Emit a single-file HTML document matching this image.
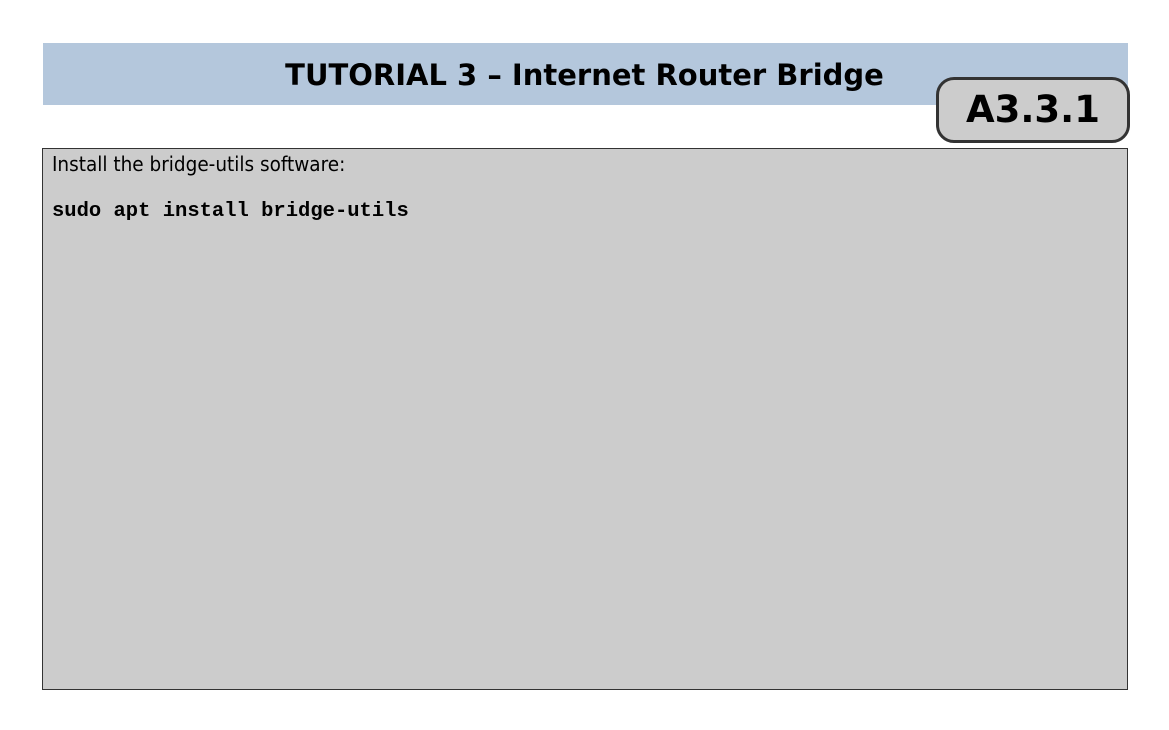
<!DOCTYPE html>
<html><head><style>
body{margin:0;width:1169px;height:730px;background:#fff;position:relative;overflow:hidden;font-family:"DejaVu Sans","Liberation Sans",sans-serif}
.banner{position:absolute;left:43px;top:43px;width:1085px;height:62px;background:#b4c7dc}
.title{position:absolute;left:0;width:1169px;top:58px;text-align:center;font-weight:bold;font-size:29px;color:#000}
.box{position:absolute;left:42px;top:148px;width:1084px;height:540px;background:#cccccc;border:1px solid #333}
.badge{position:absolute;left:936px;top:77px;width:188px;height:60px;border:3px solid #333;border-radius:18px;background:#cccccc;text-align:center;font-weight:bold;font-size:37px;line-height:60px;color:#000}
.t1{position:absolute;left:52px;top:152px;font-family:"DejaVu Sans Condensed","DejaVu Sans",sans-serif;font-stretch:condensed;font-size:20.5px;color:#000}
.t2{position:absolute;left:52px;top:200px;font-family:"Liberation Mono",monospace;font-weight:bold;font-size:20.5px;color:#000}
</style></head><body>
<div class="banner"></div>
<div class="title">TUTORIAL 3 – Internet Router Bridge</div>
<div class="box"></div>
<div class="badge">A3.3.1</div>
<div class="t1">Install the bridge-utils software:</div>
<div class="t2">sudo apt install bridge-utils</div>
</body></html>
